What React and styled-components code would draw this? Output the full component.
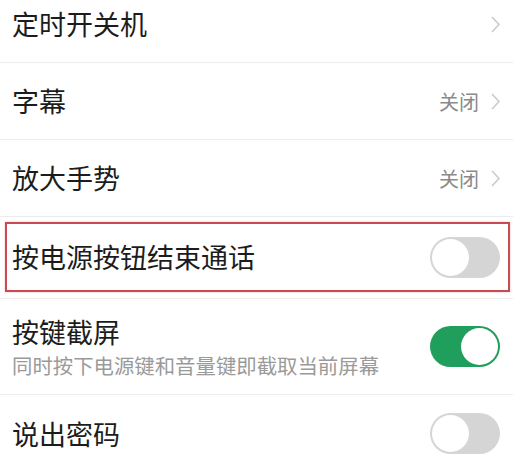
import React from 'react'
import styled, { createGlobalStyle } from 'styled-components'

const GlobalStyle = createGlobalStyle`
  body {
    margin: 0;
    background: #ffffff;
    font-family: "Noto Sans CJK SC", "Noto Sans", sans-serif;
    overflow: hidden;
  }
`

const List = styled.div`
  margin-top: -14px;
  display: flex;
  flex-direction: column;
`

const Row = styled.div`
  display: flex;
  align-items: center;
  justify-content: space-between;
  box-sizing: border-box;
  height: ${(p) => p.$h || 77}px;
  padding: ${(p) => p.$pad || '0 13px 0 12px'};
  border-bottom: 1px solid #ececec;
`

const Highlight = styled.div`
  flex: 1;
  align-self: stretch;
  display: flex;
  align-items: center;
  justify-content: space-between;
  border: 2px solid #c94a50;
  box-shadow: 0 0 2px rgba(201, 74, 80, 0.35);
  padding: 0 8px 0 5px;
`

const TextCol = styled.div`
  display: flex;
  flex-direction: column;
  gap: 4px;
`

const Title = styled.span`
  font-size: 27px;
  line-height: 32px;
  color: #1c1c1c;
`

const Sub = styled.span`
  font-size: 20.4px;
  line-height: 26px;
  color: #9a9a9a;
`

const Right = styled.div`
  display: flex;
  align-items: center;
  gap: 12px;
`

const Value = styled.span`
  font-size: 20px;
  color: #8a8a8a;
`

const Track = styled.div`
  width: 70px;
  height: 41px;
  box-sizing: border-box;
  border-radius: 21px;
  padding: 2px;
  display: flex;
  justify-content: ${(p) => (p.$on ? 'flex-end' : 'flex-start')};
  background: ${(p) => (p.$on ? '#1f9e5c' : '#d5d5d5')};
`

const Knob = styled.div`
  width: 37px;
  height: 37px;
  border-radius: 50%;
  background: #ffffff;
`

const Chevron = () => (
  <svg width="9" height="17" viewBox="0 0 9 17">
    <polyline points="1,1 8,8.5 1,16" fill="none" stroke="#c9c9c9" strokeWidth="1.5" />
  </svg>
)

const Switch = ({ on }) => (
  <Track $on={on}>
    <Knob />
  </Track>
)

const App = () => (
  <>
    <GlobalStyle />
    <List>
      <Row>
        <Title>定时开关机</Title>
        <Right>
          <Chevron />
        </Right>
      </Row>
      <Row>
        <Title>字幕</Title>
        <Right>
          <Value>关闭</Value>
          <Chevron />
        </Right>
      </Row>
      <Row>
        <Title>放大手势</Title>
        <Right>
          <Value>关闭</Value>
          <Chevron />
        </Right>
      </Row>
      <Row $h={82} $pad="5px 3px 6px 5px">
        <Highlight>
          <Title>按电源按钮结束通话</Title>
          <Switch on={false} />
        </Highlight>
      </Row>
      <Row $h={96}>
        <TextCol>
          <Title>按键截屏</Title>
          <Sub>同时按下电源键和音量键即截取当前屏幕</Sub>
        </TextCol>
        <Switch on />
      </Row>
      <Row $h={78}>
        <Title>说出密码</Title>
        <Switch on={false} />
      </Row>
    </List>
  </>
)

export default App
